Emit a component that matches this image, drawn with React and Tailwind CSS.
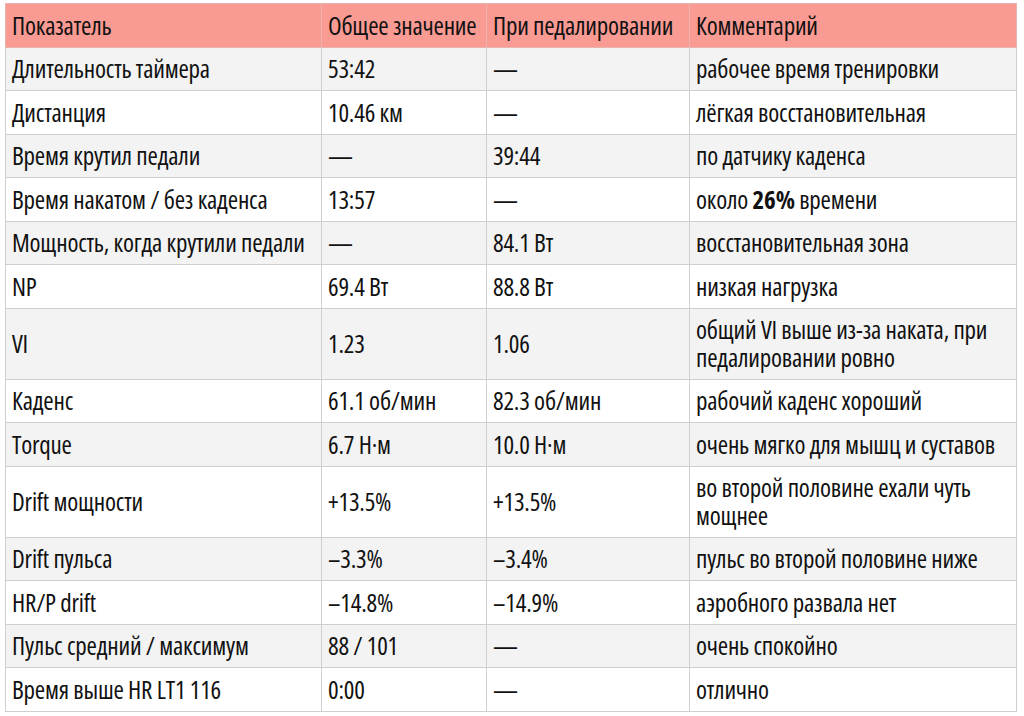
const rows = [
  ["Длительность таймера", "53:42", "—", "рабочее время тренировки"],
  ["Дистанция", "10.46 км", "—", "лёгкая восстановительная"],
  ["Время крутил педали", "—", "39:44", "по датчику каденса"],
  ["Время накатом / без каденса", "13:57", "—", <>около <b className="font-bold">26%</b> времени</>],
  ["Мощность, когда крутили педали", "—", "84.1 Вт", "восстановительная зона"],
  ["NP", "69.4 Вт", "88.8 Вт", "низкая нагрузка"],
  ["VI", "1.23", "1.06", "общий VI выше из-за наката, при педалировании ровно"],
  ["Каденс", "61.1 об/мин", "82.3 об/мин", "рабочий каденс хороший"],
  ["Torque", "6.7 Н·м", "10.0 Н·м", "очень мягко для мышц и суставов"],
  ["Drift мощности", "+13.5%", "+13.5%", "во второй половине ехали чуть мощнее"],
  ["Drift пульса", "–3.3%", "–3.4%", "пульс во второй половине ниже"],
  ["HR/P drift", "–14.8%", "–14.9%", "аэробного развала нет"],
  ["Пульс средний / максимум", "88 / 101", "—", "очень спокойно"],
  ["Время выше HR LT1 116", "0:00", "—", "отлично"],
];

const headers = ["Показатель", "Общее значение", "При педалировании", "Комментарий"];

const cell = "border border-[#cfcfcf] px-[6px] py-[7.5px] align-middle";

export default function App() {
  return (
    <div className="w-[1024px] h-[716px] bg-white pt-[3px] pl-[5px]">
      <table
        className="table-fixed border-collapse w-[1011px] text-[#111] text-[25px] leading-[27.5px] tracking-[-0.2px]"
        style={{ fontFamily: "'Open Sans', sans-serif", fontStretch: "condensed" }}
      >
        <colgroup>
          <col className="w-[316px]" />
          <col className="w-[165px]" />
          <col className="w-[203px]" />
          <col className="w-[327px]" />
        </colgroup>
        <thead>
          <tr className="bg-[#f99a93]">
            {headers.map(h => (
              <th key={h} className={`${cell} text-left font-normal whitespace-nowrap border-[#e9b3ae]`}>{h}</th>
            ))}
          </tr>
        </thead>
        <tbody>
          {rows.map((r, i) => (
            <tr key={i} className={i % 2 === 0 ? "bg-[#f3f3f3]" : "bg-white"}>
              {r.map((c, j) => (
                <td key={j} className={j < 3 ? `${cell} whitespace-nowrap` : cell}>{c}</td>
              ))}
            </tr>
          ))}
        </tbody>
      </table>
    </div>
  );
}
